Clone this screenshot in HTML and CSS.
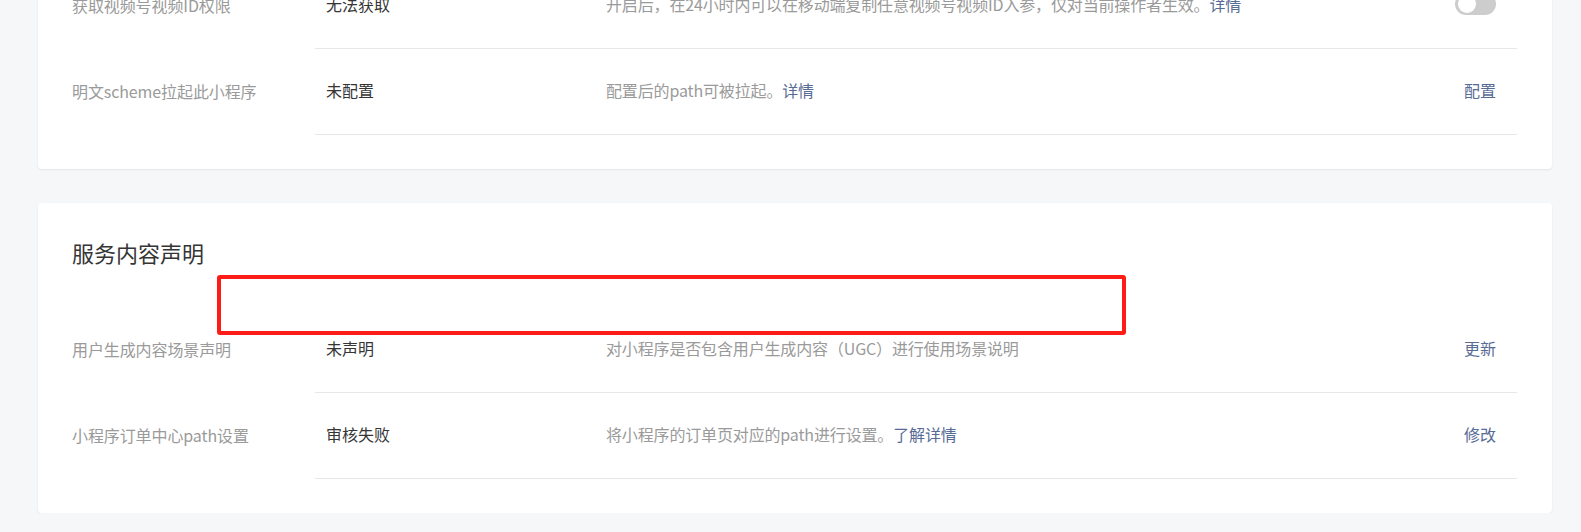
FILE: index.html
```html
<!DOCTYPE html>
<html lang="zh-CN">
<head>
<meta charset="utf-8">
<title>设置</title>
<link rel="stylesheet" href="styles.css">
</head>
<body>
<div class="page">
  <section class="card card-first">
    <div class="row">
      <div class="row-label">获取视频号视频ID权限</div>
      <div class="row-body">
        <div class="row-value">无法获取</div>
        <div class="row-desc">开启后，在24小时内可以在移动端复制任意视频号视频ID入参，仅对当前操作者生效。<a class="link">详情</a></div>
        <div class="row-action"><span class="switch"><span class="switch-knob"></span></span></div>
      </div>
    </div>
    <div class="row">
      <div class="row-label">明文scheme拉起此小程序</div>
      <div class="row-body">
        <div class="row-value">未配置</div>
        <div class="row-desc">配置后的path可被拉起。<a class="link">详情</a></div>
        <div class="row-action"><a class="link">配置</a></div>
      </div>
    </div>
  </section>

  <section class="card card-second">
    <h2 class="card-title">服务内容声明</h2>
    <div class="row">
      <div class="row-label">用户生成内容场景声明</div>
      <div class="row-body">
        <div class="row-value">未声明</div>
        <div class="row-desc">对小程序是否包含用户生成内容（UGC）进行使用场景说明</div>
        <div class="row-action"><a class="link">更新</a></div>
      </div>
    </div>
    <div class="row">
      <div class="row-label">小程序订单中心path设置</div>
      <div class="row-body">
        <div class="row-value">审核失败</div>
        <div class="row-desc">将小程序的订单页对应的path进行设置。<a class="link">了解详情</a></div>
        <div class="row-action"><a class="link">修改</a></div>
      </div>
    </div>
    <div class="highlight-box"></div>
  </section>
</div>
</body>
</html>
```

FILE: styles.css
```css
html, body {
  margin: 0;
  padding: 0;
}

body {
  background: #f6f7f9;
  font-family: "Noto Sans CJK SC", "Noto Sans", sans-serif;
  font-size: 16px;
  line-height: 24px;
  color: #353535;
  overflow: hidden;
}

.page {
  padding: 0 29px 0 38px;
}

.card {
  position: relative;
  background: #ffffff;
  border-radius: 4px;
  box-shadow: 0 1px 2px rgba(0, 0, 0, 0.08);
  padding: 0 35px 34px 34px;
}

.card-first {
  margin-top: -37px;
}

.card-second {
  margin-top: 34px;
  padding-top: 31px;
}

.card-title {
  margin: 0 0 37px 0;
  font-size: 22px;
  line-height: 36px;
  font-weight: normal;
  color: #353535;
}

.row {
  display: flex;
  height: 86px;
}

.row-label {
  width: 243px;
  flex: none;
  display: flex;
  align-items: center;
  box-sizing: border-box;
  padding-bottom: 3px;
  color: #9a9a9a;
  letter-spacing: -0.1px;
}

.row-body {
  flex: 1;
  display: flex;
  align-items: center;
  box-sizing: border-box;
  border-bottom: 1px solid #e7e7eb;
  padding: 0 21px 3px 11px;
}

.row-value {
  width: 280px;
  flex: none;
  color: #353535;
}

.row-desc {
  flex: 1;
  color: #9a9a9a;
  letter-spacing: -0.15px;
}

.row-action {
  flex: none;
  display: flex;
  align-items: center;
}

.link {
  color: #576b95;
  text-decoration: none;
  cursor: pointer;
}

.switch {
  position: relative;
  display: block;
  width: 41px;
  height: 22px;
  border-radius: 11px;
  background: #cdcdcd;
}

.switch-knob {
  position: absolute;
  left: 3px;
  top: 2px;
  width: 18px;
  height: 18px;
  border-radius: 50%;
  background: #ffffff;
}

.highlight-box {
  position: absolute;
  left: 179px;
  top: 72px;
  width: 909px;
  height: 60px;
  box-sizing: border-box;
  border: 4px solid #fd1c16;
  border-radius: 3px;
}
```
